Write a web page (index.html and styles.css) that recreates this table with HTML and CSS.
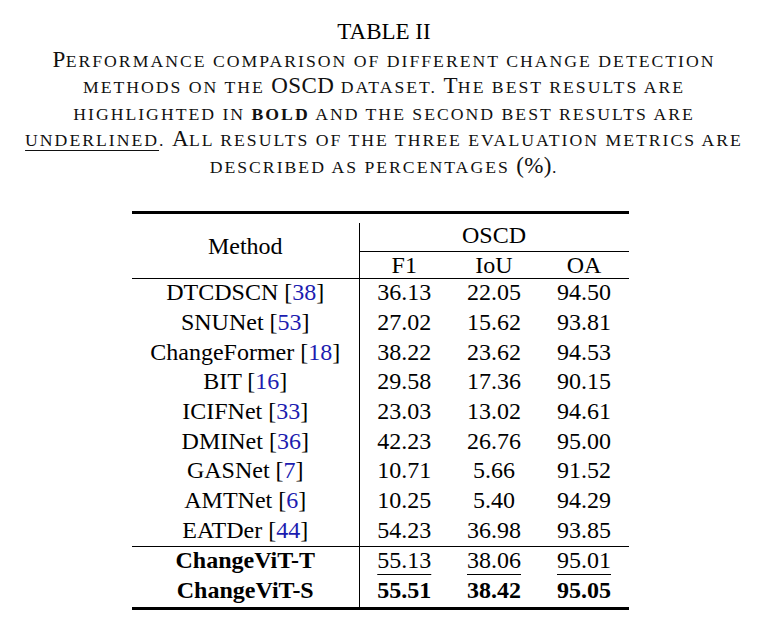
FILE: index.html
```html
<!DOCTYPE html>
<html>
<head>
<meta charset="utf-8">
<link rel="stylesheet" href="styles.css">
</head>
<body>
<div class="page">
  <div class="caption">
    <div class="label">TABLE II</div>
    <div class="sc"><span class="big">P</span>erformance comparison of different change detection<br>
    methods on the <span class="big">OSCD</span> dataset. <span class="big">T</span>he best results are<br>
    highlighted in <b>bold</b> and the second best results are<br>
    <span class="ul">underlined</span>. <span class="big">A</span>ll results of the three evaluation metrics are<br>
    described as percentages <span class="big">(%)</span>.</div>
  </div>
  <table class="results">
    <colgroup>
      <col class="c-method"><col class="c-num"><col class="c-num"><col class="c-num">
    </colgroup>
    <thead>
      <tr class="h1">
        <th rowspan="2" class="method-h">Method</th>
        <th colspan="3" class="ds">OSCD</th>
      </tr>
      <tr class="h2">
        <th class="sep">F1</th><th>IoU</th><th>OA</th>
      </tr>
    </thead>
    <tbody class="base">
      <tr><td>DTCDSCN [<span class="ref">38</span>]</td><td class="sep">36.13</td><td>22.05</td><td>94.50</td></tr>
      <tr><td>SNUNet [<span class="ref">53</span>]</td><td class="sep">27.02</td><td>15.62</td><td>93.81</td></tr>
      <tr><td>ChangeFormer [<span class="ref">18</span>]</td><td class="sep">38.22</td><td>23.62</td><td>94.53</td></tr>
      <tr><td>BIT [<span class="ref">16</span>]</td><td class="sep">29.58</td><td>17.36</td><td>90.15</td></tr>
      <tr><td>ICIFNet [<span class="ref">33</span>]</td><td class="sep">23.03</td><td>13.02</td><td>94.61</td></tr>
      <tr><td>DMINet [<span class="ref">36</span>]</td><td class="sep">42.23</td><td>26.76</td><td>95.00</td></tr>
      <tr><td>GASNet [<span class="ref">7</span>]</td><td class="sep">10.71</td><td>5.66</td><td>91.52</td></tr>
      <tr><td>AMTNet [<span class="ref">6</span>]</td><td class="sep">10.25</td><td>5.40</td><td>94.29</td></tr>
      <tr><td>EATDer [<span class="ref">44</span>]</td><td class="sep">54.23</td><td>36.98</td><td>93.85</td></tr>
    </tbody>
    <tbody class="ours">
      <tr><td class="b">ChangeViT-T</td><td class="sep"><span class="ul2">55.13</span></td><td><span class="ul2">38.06</span></td><td><span class="ul2">95.01</span></td></tr>
      <tr><td class="b">ChangeViT-S</td><td class="sep b">55.51</td><td class="b">38.42</td><td class="b">95.05</td></tr>
    </tbody>
  </table>
</div>
</body>
</html>
```
FILE: styles.css
```css
html, body {
  margin: 0;
  padding: 0;
  background: #fff;
}
body {
  font-family: "Liberation Serif", "Times New Roman", serif;
  color: #000;
}
.page {
  width: 772px;
  padding-top: 19px;
}
.caption {
  width: 768px;
  text-align: center;
  font-size: 23px;
  line-height: 26.6px;
}
.caption .sc {
  margin-top: 2px;
  font-size: 17.7px;
  text-transform: uppercase;
  letter-spacing: 2px;
  color: #111;
}
.caption .big {
  font-size: 23px;
  line-height: 20px;
  letter-spacing: 0.4px;
}
.caption .ul {
  text-decoration: underline;
  text-decoration-thickness: 1px;
  text-underline-offset: 4px;
}
.results {
  margin: 30px 0 0 132px;
  border-collapse: collapse;
  border-top: 3px solid #000;
  border-bottom: 3px solid #000;
  font-size: 24px;
  line-height: 26px;
  table-layout: fixed;
  width: 497px;
}
.c-method { width: 227px; }
.c-num { width: 90px; }
.results th, .results td {
  padding: 0;
  text-align: center;
  font-weight: normal;
  white-space: nowrap;
}
.results .h1 th { height: 34px; vertical-align: bottom; padding-bottom: 3px; }
.results .h2 th { height: 26px; border-top: 1px solid #000; border-bottom: 1px solid #000; }
.results .h1 th.method-h {
  border-bottom: 1px solid #000;
  vertical-align: middle;
  padding: 0;
}
.results .ds {
  background: linear-gradient(#000, #000) left 9px / 1px calc(100% - 9px) no-repeat;
}
.results .sep { border-left: 1px solid #000; }
.results tbody td { padding-bottom: 3px; }
.base tr td { height: 27px; }
.base tr:nth-child(3n) td { height: 26px; }
.ours tr td { height: 27px; }
.ours tr:first-child td { border-top: 1px solid #000; }
.ref { color: #1c1cb0; }
.results .b { font-weight: bold; }
.ul2 {
  text-decoration: underline;
  text-decoration-thickness: 1px;
  text-underline-offset: 6px;
}
```
